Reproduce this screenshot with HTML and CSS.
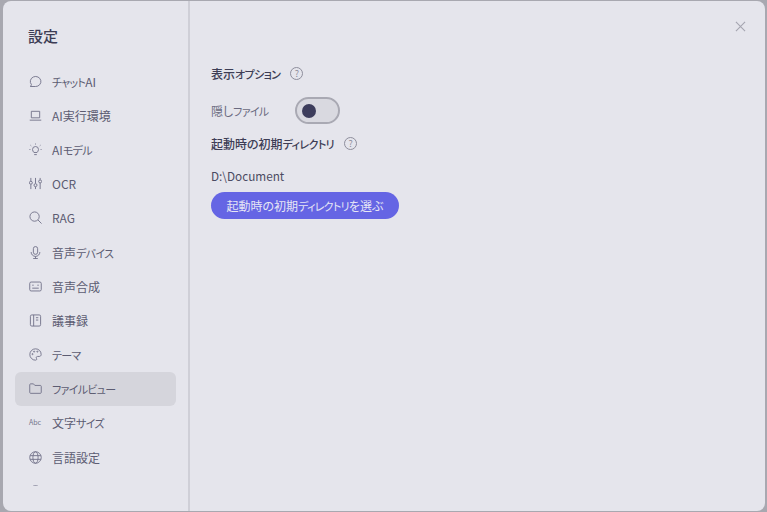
FILE: index.html
```html
<!DOCTYPE html>
<html lang="ja">
<head>
    <meta charset="UTF-8">
    <title>設定</title>
    <link rel="stylesheet" href="styles.css">
</head>
<body>
    <div class="dialog">
        <aside class="sidebar">
            <h1 class="sidebar-title">設定</h1>
            <ul class="menu">
                <li class="menu-item">
                    <svg class="icon" viewBox="0 0 14 14"><path d="M1.600 12.600l1-2.300A5.700 5.400 0 1 1 7 12.400H1.600z"/></svg>
                    <span><span class="kana">チャット</span>AI</span>
                </li>
                <li class="menu-item">
                    <svg class="icon" viewBox="0 0 14 14"><path d="M2.500 2.500h9v7h-9zM.8 12h12.400"/></svg>
                    <span>AI実行環境</span>
                </li>
                <li class="menu-item">
                    <svg class="icon" viewBox="0 0 14 14"><path d="M5.300 10.200C4.600 9 3.800 8.600 3.800 7a3.200 3.200 0 0 1 6.400 0c0 1.600-.8 2-1.500 3.200zM5.600 12.500h2.800M7 .6v1M1.600 2.400l.8.7M12.400 2.400l-.8.7M.5 7h1M12.500 7h1"/></svg>
                    <span>AI<span class="kana">モデル</span></span>
                </li>
                <li class="menu-item">
                    <svg class="icon" viewBox="0 0 14 14"><path d="M2 1v3.500M2 8v5M7 1v6M7 10.500V13M12 1v2M12 6.500V13"/><circle cx="2" cy="6.200" r="1.600"/><circle cx="7" cy="8.800" r="1.600"/><circle cx="12" cy="4.800" r="1.600"/></svg>
                    <span>OCR</span>
                </li>
                <li class="menu-item">
                    <svg class="icon" viewBox="0 0 14 14"><circle cx="6" cy="6" r="5"/><path d="M9.700 9.700l3.800 3.800"/></svg>
                    <span>RAG</span>
                </li>
                <li class="menu-item">
                    <svg class="icon" viewBox="0 0 14 14"><rect x="4.700" y=".6" width="4.600" height="8.400" rx="2.300"/><path d="M2.300 6.500a4.700 4.700 0 0 0 9.400 0M7 11.200v2.300M4.500 13.500h5"/></svg>
                    <span>音声<span class="kana">デバイス</span></span>
                </li>
                <li class="menu-item">
                    <svg class="icon" viewBox="0 0 14 14"><rect x=".8" y="2.200" width="12.400" height="9.600" rx="1.500"/><path d="M3.500 5.600h1.500M9 5.600h1.500M3.500 8.800h7"/></svg>
                    <span>音声合成</span>
                </li>
                <li class="menu-item">
                    <svg class="icon" viewBox="0 0 14 14"><rect x="1.500" y="1" width="11" height="12" rx="1.500"/><path d="M5 1v12M7.500 4h2.500M7.500 6.500h2.500"/></svg>
                    <span>議事録</span>
                </li>
                <li class="menu-item">
                    <svg class="icon" viewBox="0 0 14 14"><path d="M7 .9a6.100 6.100 0 1 0 0 12.200c1.500 0 1.500-1.200 1-2-.6-1 0-2 1.200-2h1.800c1.200 0 2.100-.8 2.100-2.100C13.100 3.300 10.400.9 7 .9z"/><circle cx="3.800" cy="6.600" r=".6"/><circle cx="5.500" cy="3.900" r=".6"/><circle cx="9" cy="3.900" r=".6"/></svg>
                    <span class="kana">テーマ</span>
                </li>
                <li class="menu-item active">
                    <svg class="icon" viewBox="0 0 14 14"><path d="M.8 11.300V2.900c0-.5.4-.9.900-.9h3.100l1.500 1.700h6c.5 0 .9.400.9.900v6.700c0 .5-.4.900-.9.900H1.700c-.5 0-.9-.4-.9-.9z"/></svg>
                    <span class="kana">ファイルビュー</span>
                </li>
                <li class="menu-item">
                    <span class="icon abc">Abc</span>
                    <span>文字<span class="kana">サイズ</span></span>
                </li>
                <li class="menu-item">
                    <svg class="icon" viewBox="0 0 14 14"><circle cx="7" cy="7" r="6.200"/><ellipse cx="7" cy="7" rx="2.800" ry="6.200"/><path d="M1.200 5h11.600M1.200 9h11.600"/></svg>
                    <span>言語設定</span>
                </li>
                <li class="menu-item">
                    <svg class="icon" viewBox="0 0 14 14"><circle cx="7" cy="7" r="6.200"/></svg>
                    <span>その他</span>
                </li>
            </ul>
        </aside>
        <main class="content">
            <svg class="close" viewBox="0 0 12 12"><path d="M1 1l10 10M11 1L1 11"/></svg>
            <div class="heading">
                <span>表示<span class="kana">オプション</span></span>
                <span class="help">?</span>
            </div>
            <div class="toggle-row">
                <span class="toggle-label">隠し<span class="kana">ファイル</span></span>
                <span class="toggle"><span class="toggle-knob"></span></span>
            </div>
            <div class="heading second">
                <span>起動時の初期<span class="kana">ディレクトリ</span></span>
                <span class="help">?</span>
            </div>
            <p class="path">D:\Document</p>
            <button class="pick-button">起動時の初期<span class="kana">ディレクトリ</span>を選ぶ</button>
        </main>
    </div>
</body>
</html>
```

FILE: styles.css
```css
html, body {
    height: 100%;
}
body {
    margin: 0;
    padding: 1px 2px 1px 3px;
    box-sizing: border-box;
    background-color: #a8a8b0;
    font-family: "Noto Sans CJK JP", "Noto Sans", sans-serif;
    font-feature-settings: "palt";
    overflow: hidden;
}
.dialog {
    display: flex;
    height: 100%;
    background-color: #e5e5ec;
    border-radius: 8px;
    overflow: hidden;
}
.sidebar {
    width: 185px;
    height: 485px;
    flex-shrink: 0;
    overflow: hidden;
    padding-left: 12px;
    box-sizing: border-box;
}
.sidebar-title {
    margin: 23px 0 0 13px;
    font-size: 15px;
    line-height: 23px;
    font-weight: 500;
    color: #3d3d55;
}
.menu {
    list-style: none;
    margin: 17px 0 0;
    padding: 0;
    width: 161px;
}
.menu-item {
    display: flex;
    align-items: center;
    gap: 10px;
    height: 34.2px;
    padding-left: 14px;
    border-radius: 6px;
    font-size: 12px;
    color: #5c5c72;
}
.menu-item.active {
    background-color: #d5d5dc;
}
.kana {
    font-size: 11px;
    letter-spacing: -.7px;
}
.icon {
    width: 13px;
    height: 13px;
    flex-shrink: 0;
    fill: none;
    stroke: #74748a;
    stroke-width: 1;
}
.abc {
    font-size: 7px;
    line-height: 13px;
    color: #74748a;
}
.content {
    position: relative;
    flex: 1;
    border-left: 2px solid #cfcfd7;
    padding: 63px 22px 0 21px;
}
.close {
    position: absolute;
    top: 20px;
    right: 19px;
    width: 11px;
    height: 11px;
    fill: none;
    stroke: #a5a5b0;
    stroke-width: 1.2;
}
.heading {
    display: flex;
    align-items: center;
    gap: 10px;
    height: 18px;
    font-size: 12px;
    font-weight: 500;
    color: #3d3d55;
}
.heading .kana {
    letter-spacing: -.6px;
}
.heading.second {
    margin-top: 10px;
}
.help {
    width: 11px;
    height: 11px;
    border: 1px solid #8e8e9c;
    border-radius: 50%;
    font-size: 9px;
    line-height: 11px;
    text-align: center;
    font-weight: 400;
    color: #8e8e9c;
}
.toggle-row {
    display: flex;
    align-items: center;
    gap: 27px;
    margin-top: 15px;
}
.toggle-label {
    font-size: 12px;
    color: #6a6a80;
}
.toggle {
    display: flex;
    align-items: center;
    width: 45px;
    height: 27px;
    padding-left: 5px;
    box-sizing: border-box;
    border: 2px solid #a9a9b3;
    border-radius: 14px;
    background-color: #d9d9e0;
}
.toggle-knob {
    width: 14px;
    height: 14px;
    border-radius: 50%;
    background-color: #3d3d5c;
}
.path {
    margin: 15px 0 0;
    font-size: 11.75px;
    line-height: 18px;
    color: #4b4b62;
}
.pick-button {
    display: block;
    width: 188px;
    height: 27px;
    margin-top: 7px;
    padding: 0;
    border: none;
    border-radius: 14px;
    background-color: #6565e4;
    color: #e5e5f5;
    font-family: inherit;
    font-feature-settings: inherit;
    font-size: 12px;
}
```
